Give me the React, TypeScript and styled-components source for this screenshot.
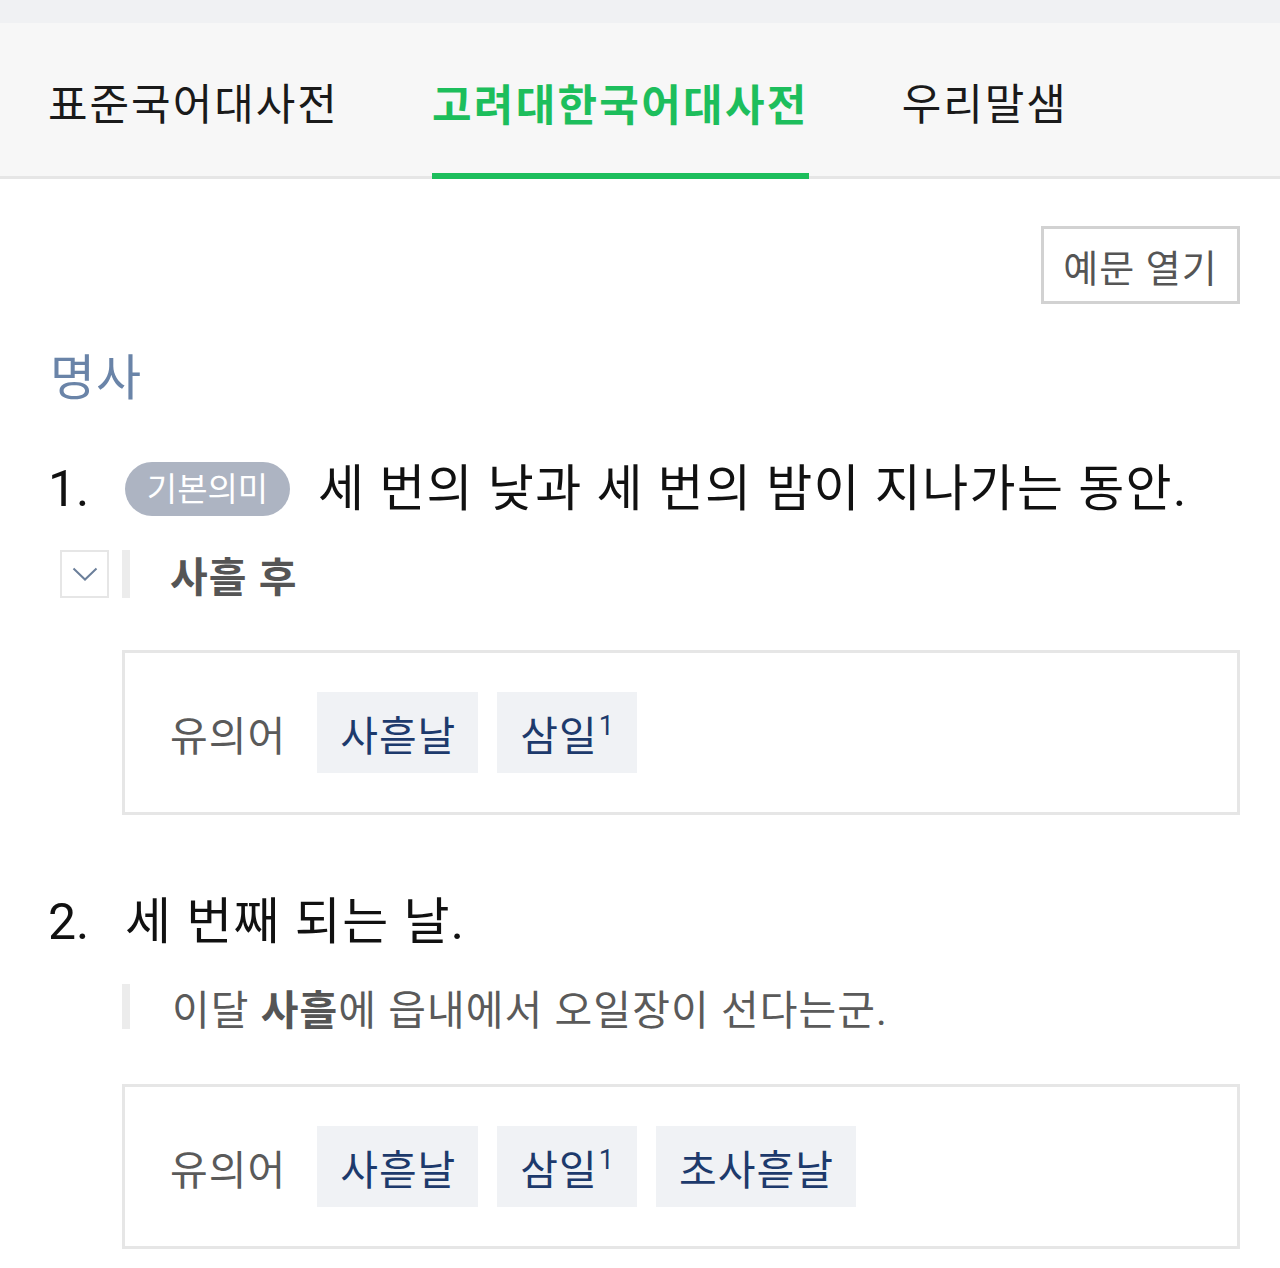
import * as React from "react";
import styled, { createGlobalStyle } from "styled-components";

const GlobalStyle = createGlobalStyle`
  html, body {
    margin: 0;
    padding: 0;
    background: #ffffff;
  }
  body {
    font-family: Roboto, "Noto Sans CJK KR", "Noto Sans", sans-serif;
    color: #111111;
  }
`;

const StatusStrip = styled.div`
  height: 23px;
  background: #f0f1f3;
`;

const TabBar = styled.nav`
  display: flex;
  gap: 93px;
  height: 153px;
  padding-left: 48px;
  background: #f7f7f7;
  border-bottom: 3px solid #e6e6e6;
`;

const Tab = styled.a<{ $active?: boolean }>`
  display: flex;
  align-items: center;
  padding-top: 2px;
  margin-bottom: ${(p) => (p.$active ? "-3px" : "0")};
  font-size: 43px;
  letter-spacing: ${(p) => (p.$active ? "2.3px" : "2px")};
  font-weight: ${(p) => (p.$active ? 700 : 400)};
  color: ${(p) => (p.$active ? "#1dbe5c" : "#1a1a1a")};
  box-shadow: ${(p) => (p.$active ? "inset 0 -6px 0 #1dbe5c" : "none")};
  white-space: nowrap;
  cursor: pointer;
`;

const Content = styled.main`
  padding: 0 40px 0 48px;
`;

const ToolRow = styled.div`
  display: flex;
  justify-content: flex-end;
  margin-top: 47px;
`;

const ExampleToggle = styled.button`
  width: 199px;
  height: 78px;
  border: 3px solid #d2d2d2;
  background: #ffffff;
  color: #555555;
  font-family: inherit;
  font-size: 38px;
  letter-spacing: 1px;
  padding: 0;
`;

const PartOfSpeech = styled.h2`
  margin: 45px 0 0 2px;
  font-size: 49px;
  letter-spacing: 1px;
  font-weight: 400;
  line-height: 60px;
  color: #6a84a8;
`;

const SenseHead = styled.div<{ $top: number }>`
  display: flex;
  align-items: center;
  margin-top: ${(p) => p.$top}px;
  font-size: 50px;
  line-height: 60px;
`;

const SenseNum = styled.span`
  width: 77px;
  flex: none;
`;

const Badge = styled.span`
  display: inline-flex;
  align-items: center;
  justify-content: center;
  width: 165px;
  height: 54px;
  margin-right: 28px;
  border-radius: 27px;
  background: #adb4c2;
  color: #ffffff;
  font-size: 33px;
  line-height: 1;
`;

const Definition = styled.span`
  color: #111111;
  letter-spacing: 1.4px;
  white-space: nowrap;
`;

const DetailRow = styled.div<{ $top: number; $h: number }>`
  display: flex;
  align-items: center;
  margin-top: ${(p) => p.$top}px;
  height: ${(p) => p.$h}px;
`;

const ChevronBox = styled.span`
  display: flex;
  align-items: center;
  justify-content: center;
  box-sizing: border-box;
  width: 49px;
  height: 48px;
  margin-left: 12px;
  border: 2px solid #e6e6e6;
  color: #6b7f9a;
`;

const QuoteBar = styled.span<{ $offset: number }>`
  align-self: stretch;
  width: 8px;
  margin-left: ${(p) => p.$offset}px;
  background: #ececec;
  flex: none;
`;

const DetailText = styled.span<{ $gap: number }>`
  margin-left: ${(p) => p.$gap}px;
  font-size: 41px;
  letter-spacing: 1.05px;
  color: #5a5a5a;
  white-space: nowrap;
  b {
    font-weight: 700;
    color: #555555;
  }
`;

const SynonymBox = styled.section<{ $top: number }>`
  display: flex;
  align-items: center;
  gap: 19px;
  box-sizing: border-box;
  height: 165px;
  margin: ${(p) => p.$top}px 0 0 74px;
  padding-left: 45px;
  border: 3px solid #e6e6e6;
`;

const SynonymLabel = styled.span`
  margin-right: 12px;
  font-size: 41px;
  letter-spacing: 1px;
  color: #5a5a5a;
`;

const Chip = styled.a`
  display: flex;
  align-items: center;
  height: 81px;
  padding: 0 22px 0 23px;
  background: #f0f2f5;
  color: #1d3a6c;
  font-size: 41px;
  letter-spacing: 1px;
  white-space: nowrap;
  sup {
    font-family: Roboto, sans-serif;
    font-size: 27px;
    line-height: 1;
    margin-left: 1px;
    position: relative;
    top: -6px;
  }
`;

const Chevron = () => (
  <svg width="26" height="14" viewBox="0 0 26 14" fill="none">
    <path d="M1.5 1.5 L13 12.5 L24.5 1.5" stroke="currentColor" strokeWidth="2" />
  </svg>
);

const Synonyms = ({ words, top }: { words: { w: string; n?: number }[]; top: number }) => (
  <SynonymBox $top={top}>
    <SynonymLabel>유의어</SynonymLabel>
    {words.map((x) => (
      <Chip key={x.w}>
        {x.w}
        {x.n ? <sup>{x.n}</sup> : null}
      </Chip>
    ))}
  </SynonymBox>
);

const tabs = ["표준국어대사전", "고려대한국어대사전", "우리말샘"];

export default function App() {
  return (
    <>
      <GlobalStyle />
      <StatusStrip />
      <TabBar>
        {tabs.map((t, i) => (
          <Tab key={t} $active={i === 1}>
            {t}
          </Tab>
        ))}
      </TabBar>
      <Content>
        <ToolRow>
          <ExampleToggle>예문 열기</ExampleToggle>
        </ToolRow>
        <PartOfSpeech>명사</PartOfSpeech>

        <SenseHead $top={50}>
          <SenseNum>1.</SenseNum>
          <Badge>기본의미</Badge>
          <Definition>세 번의 낮과 세 번의 밤이 지나가는 동안.</Definition>
        </SenseHead>
        <DetailRow $top={31} $h={48}>
          <ChevronBox>
            <Chevron />
          </ChevronBox>
          <QuoteBar $offset={13} />
          <DetailText $gap={40}>
            <b>사흘 후</b>
          </DetailText>
        </DetailRow>
        <Synonyms top={52} words={[{ w: "사흗날" }, { w: "삼일", n: 1 }]} />

        <SenseHead $top={77}>
          <SenseNum>2.</SenseNum>
          <Definition>세 번째 되는 날.</Definition>
        </SenseHead>
        <DetailRow $top={32} $h={45}>
          <QuoteBar $offset={74} />
          <DetailText $gap={42}>
            이달 <b>사흘</b>에 읍내에서 오일장이 선다는군.
          </DetailText>
        </DetailRow>
        <Synonyms
          top={55}
          words={[{ w: "사흗날" }, { w: "삼일", n: 1 }, { w: "초사흗날" }]}
        />
      </Content>
    </>
  );
}
